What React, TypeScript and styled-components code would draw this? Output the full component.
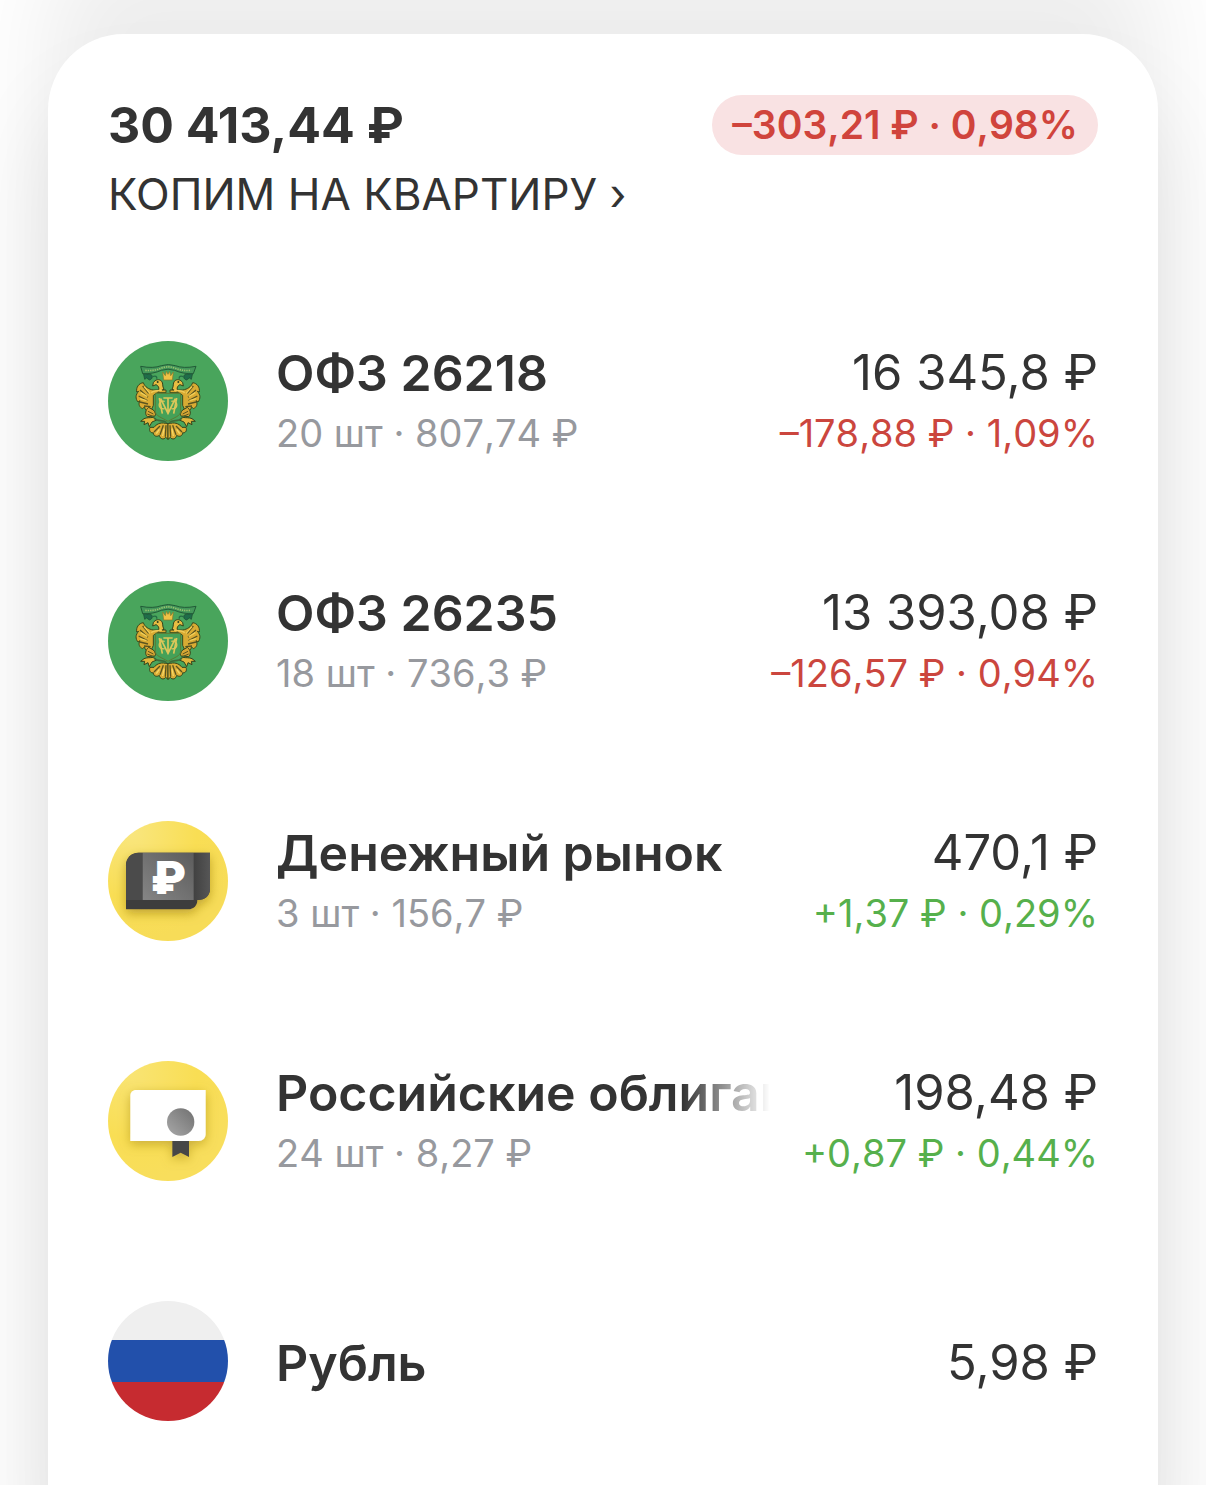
import React from "react";
import styled, { createGlobalStyle } from "styled-components";

type Trend = "up" | "down";

interface Holding {
  id: string;
  name: string;
  details?: string;
  value: string;
  change?: string;
  trend?: Trend;
  icon: React.ReactNode;
  faded?: boolean;
}

const GlobalStyle = createGlobalStyle`
  * {
    box-sizing: border-box;
  }

  body {
    margin: 0;
    background: #fefefe;
    color: #333333;
    font-family: Inter, "Liberation Sans", sans-serif;
  }
`;

const Page = styled.main`
  display: flex;
  flex-direction: column;
  min-height: 100vh;
  padding: 34px 48px 0;
  overflow: hidden;
`;

const Card = styled.section`
  flex: 1;
  margin-bottom: -160px;
  padding: 60px 60px 224px;
  border-radius: 76px 76px 0 0;
  background: #ffffff;
  box-shadow:
    0 60px 90px rgba(0, 0, 0, 0.09),
    0 -90px 90px rgba(0, 0, 0, 0.065);
`;

const Header = styled.header`
  display: flex;
  flex-direction: column;
  gap: 10px;
`;

const TotalRow = styled.div`
  display: flex;
  align-items: center;
  justify-content: space-between;
  gap: 32px;
`;

const Total = styled.h1`
  margin: 0;
  font-size: 50px;
  font-weight: 700;
  line-height: 62px;
`;

const Badge = styled.span`
  padding: 0 20px;
  border-radius: 30px;
  background: #f9e2e3;
  color: #d0443c;
  font-size: 39px;
  font-weight: 600;
  font-kerning: none;
  line-height: 60px;
  white-space: nowrap;
`;

const AccountLink = styled.a`
  align-self: flex-start;
  color: inherit;
  font-size: 44px;
  line-height: 56px;
  text-decoration: none;
`;

const List = styled.ul`
  display: flex;
  flex-direction: column;
  gap: 116px;
  margin: 117px 0 0;
  padding: 0;
  list-style: none;
`;

const Row = styled.li`
  display: flex;
  align-items: center;
  min-height: 124px;
`;

const IconSvg = styled.svg`
  display: block;
  flex: none;
  width: 120px;
  height: 120px;
  margin-right: 48px;
  border-radius: 50%;
`;

const Info = styled.div`
  flex: 1;
  min-width: 0;
  padding-top: 4px;
`;

const Amounts = styled.div`
  flex: none;
  margin-left: 32px;
  padding-top: 4px;
  text-align: right;
`;

const Name = styled.h2<{ $faded?: boolean }>`
  margin: 0;
  overflow: hidden;
  font-size: 50px;
  font-weight: 600;
  line-height: 60px;
  white-space: nowrap;
  mask-image: ${({ $faded }) =>
    $faded ? "linear-gradient(to left, transparent, #000 88px)" : "none"};
`;

const Details = styled.p`
  margin: 0;
  color: #97999e;
  font-size: 38px;
  font-kerning: none;
  line-height: 60px;
`;

const Value = styled.p`
  margin: 0;
  font-size: 49px;
  line-height: 60px;
`;

const Change = styled.p<{ $trend?: Trend }>`
  margin: 0;
  color: ${({ $trend }) => ($trend === "up" ? "#56b04c" : "#cb463e")};
  font-size: 38px;
  font-kerning: none;
  line-height: 60px;
`;

// Half of the eagle, mirrored around x=204 for the other side
const EagleHalf = () => (
  <g>
    {/* wing */}
    <path
      d="M130 158 C116 160 108 172 110 186 L116 184 C106 194 106 206 114 216 L120 212 C114 222 118 232 128 236 L134 230 C134 240 142 246 152 244 L160 226 L160 196 L172 188 L198 188 L198 180 L160 180 C146 178 134 170 130 158 Z"
      fill="#d9ab33"
      stroke="#3c4a1c"
      strokeWidth="3"
    />
    <path
      d="M128 168 L146 190 M120 180 L144 202 M116 198 L142 212 M120 216 L144 222 M132 228 L152 230"
      stroke="#5a5420"
      strokeWidth="4"
    />
    <path
      d="M132 170 L150 190 M122 188 L142 200 M120 206 L140 212"
      stroke="#f1ce55"
      strokeWidth="4"
    />
    {/* head and neck */}
    <path
      d="M160 158 C166 148 178 146 185 154 C190 160 186 168 192 178 L174 184 C180 174 174 166 168 164 L158 168 Z"
      fill="#e8bd42"
      stroke="#33431b"
      strokeWidth="3"
    />
    <circle cx="173" cy="156" r="3" fill="#33431b" />
    <path d="M154 188 C160 180 174 184 186 180" stroke="#f0cb58" strokeWidth="5" fill="none" />
    {/* leg */}
    <path
      d="M146 232 C136 240 134 252 142 260 L158 258 C170 262 168 248 160 240 Z"
      fill="#d7a634"
      stroke="#34441c"
      strokeWidth="3"
    />
    <path d="M144 244 L160 252 M142 252 L156 258" stroke="#5a5420" strokeWidth="3" />
    {/* claws */}
    <path
      d="M160 262 C150 264 140 262 132 266 L122 274 L134 274 L132 284 L144 278 L148 290 L156 276 L170 270 Z"
      fill="#e2b63c"
      stroke="#34441c"
      strokeWidth="3"
    />
    {/* tail */}
    <path
      d="M196 280 C180 276 168 284 162 292 L150 292 C146 302 152 310 160 308 C160 318 170 322 178 316 C180 328 192 330 197 322 L204 328 L204 280 Z"
      fill="#dcae36"
      stroke="#34441c"
      strokeWidth="3"
    />
    <path
      d="M198 286 L196 320 M190 286 L180 314 M180 288 L162 306"
      stroke="#5a5420"
      strokeWidth="4"
    />
    <path d="M192 296 L188 318 M178 298 L169 311" stroke="#f6d766" strokeWidth="4" />
    <path d="M162 264 C174 278 188 266 200 278" stroke="#3d6b3a" strokeWidth="5" fill="none" />
    {/* ribbon end */}
    <path
      d="M130 130 L154 134 C160 140 156 148 148 150 L140 144 L134 148 Z"
      fill="#1f6d49"
      stroke="#1e4a32"
      strokeWidth="2"
    />
    <path d="M158 140 C166 136 172 140 170 146" stroke="#256c45" strokeWidth="4" fill="none" />
  </g>
);

const CrestIcon = () => (
  <IconSvg viewBox="24 33 360 360" aria-hidden="true">
    <rect x="24" y="33" width="360" height="360" fill="#49a55c" />
    <EagleHalf />
    <g transform="translate(408 0) scale(-1 1)">
      <EagleHalf />
    </g>
    {/* shield */}
    <path
      d="M166 190 H242 V244 C242 258 224 262 204 274 C184 262 166 258 166 244 Z"
      fill="#45a158"
      stroke="#5e7932"
      strokeWidth="3"
    />
    <path
      d="M178 204 L187 251 M230 204 L221 251 M182 206 L204 250 L226 206 M204 202 V252 M190 204 H218"
      stroke="#dcc75a"
      strokeWidth="5"
      fill="none"
    />
    <path
      d="M194 214 C172 210 172 240 194 236 M214 214 C236 210 236 240 214 236"
      stroke="#dcc75a"
      strokeWidth="4"
      fill="none"
    />
    {/* crown */}
    <path
      d="M188 126 L196 137 L199 124 L204 133 L209 124 L212 137 L220 126 L217 150 H191 Z"
      fill="#eec246"
      stroke="#8d7a28"
      strokeWidth="2"
    />
    {/* ribbon */}
    <path
      d="M122 109 C148 114 168 113 184 107 Q205 100 226 107 C242 113 262 114 288 109 L280 131 C258 132 240 128 224 121 Q204 114 184 121 C168 128 150 132 128 131 Z"
      fill="#43975a"
      stroke="#225b38"
      strokeWidth="3"
    />
    <path
      d="M136 121 C154 123 170 120 185 114 Q204 107 223 114 C240 120 254 123 274 121"
      stroke="#9ac06e"
      strokeWidth="5"
      strokeDasharray="4 3"
      fill="none"
    />
  </IconSvg>
);

const MoneyMarketIcon = () => (
  <IconSvg viewBox="24 33 360 360" aria-hidden="true">
    <defs>
      <radialGradient id="moneyBg" cx="0.2" cy="0.1" r="0.9">
        <stop offset="0" stopColor="#f9e67e" />
        <stop offset="0.6" stopColor="#f9de54" />
        <stop offset="1" stopColor="#f7dc58" />
      </radialGradient>
      <linearGradient id="billFace" x1="0" y1="1" x2="1" y2="0">
        <stop offset="0" stopColor="#858585" />
        <stop offset="1" stopColor="#5c5c5c" />
      </linearGradient>
      <linearGradient id="billSide" x1="0" y1="0" x2="1" y2="0">
        <stop offset="0" stopColor="#414141" />
        <stop offset="1" stopColor="#565656" />
      </linearGradient>
      <filter id="moneyShadow" x="-30%" y="-30%" width="160%" height="170%">
        <feDropShadow dx="0" dy="12" stdDeviation="16" floodColor="#9a7b10" floodOpacity="0.6" />
      </filter>
    </defs>
    <rect x="24" y="33" width="360" height="360" fill="url(#moneyBg)" />
    <g filter="url(#moneyShadow)">
      <path
        d="M116 128 H330 V236 C330 256 316 270 292 270 C292 286 282 298 264 298 H78 V166 C78 144 94 128 116 128 Z"
        fill="#3c3c3c"
      />
    </g>
    <path d="M116 128 H128 V270 H78 V166 C78 144 94 128 116 128 Z" fill="#4b4b4b" />
    <path d="M281 128 H330 V236 C330 256 316 270 292 270 H281 Z" fill="url(#billSide)" />
    <rect x="128" y="128" width="153" height="142" fill="url(#billFace)" />
    <text
      x="204"
      y="251"
      fill="#ffffff"
      fontFamily="Inter, sans-serif"
      fontSize="136"
      fontWeight="900"
      textAnchor="middle"
    >
      ₽
    </text>
  </IconSvg>
);

const BondsIcon = () => (
  <IconSvg viewBox="24 33 360 360" aria-hidden="true">
    <defs>
      <radialGradient id="bondsBg" cx="0.2" cy="0.1" r="0.9">
        <stop offset="0" stopColor="#f9e473" />
        <stop offset="0.6" stopColor="#f9de54" />
        <stop offset="1" stopColor="#f8de5c" />
      </radialGradient>
      <linearGradient id="seal" x1="0" y1="1" x2="1" y2="0">
        <stop offset="0" stopColor="#a8a8a8" />
        <stop offset="1" stopColor="#707070" />
      </linearGradient>
      <filter id="bondsShadow" x="-30%" y="-30%" width="160%" height="170%">
        <feDropShadow dx="0" dy="10" stdDeviation="16" floodColor="#9a7b10" floodOpacity="0.5" />
      </filter>
    </defs>
    <rect x="24" y="33" width="360" height="360" fill="url(#bondsBg)" />
    <g filter="url(#bondsShadow)">
      <path d="M217 266 H267 V321 L242 308 L217 321 Z" fill="#474747" />
      <path
        d="M108 120 H317 V252 C317 264 308 273 296 273 H91 V137 C91 127 98 120 108 120 Z"
        fill="#ffffff"
      />
    </g>
    <circle cx="242" cy="216" r="41" fill="url(#seal)" />
  </IconSvg>
);

const RubleFlagIcon = () => (
  <IconSvg viewBox="0 0 120 120" aria-hidden="true">
    <rect width="120" height="39" fill="#efefef" />
    <rect y="39" width="120" height="42" fill="#2250ab" />
    <rect y="81" width="120" height="39" fill="#c62b30" />
  </IconSvg>
);

const holdings: Holding[] = [
  {
    id: "ofz-26218",
    name: "ОФЗ 26218",
    details: "20 шт · 807,74 ₽",
    value: "16 345,8 ₽",
    change: "–178,88 ₽ · 1,09%",
    trend: "down",
    icon: <CrestIcon />,
  },
  {
    id: "ofz-26235",
    name: "ОФЗ 26235",
    details: "18 шт · 736,3 ₽",
    value: "13 393,08 ₽",
    change: "–126,57 ₽ · 0,94%",
    trend: "down",
    icon: <CrestIcon />,
  },
  {
    id: "money-market",
    name: "Денежный рынок",
    details: "3 шт · 156,7 ₽",
    value: "470,1 ₽",
    change: "+1,37 ₽ · 0,29%",
    trend: "up",
    icon: <MoneyMarketIcon />,
  },
  {
    id: "bonds",
    name: "Российские облигации",
    details: "24 шт · 8,27 ₽",
    value: "198,48 ₽",
    change: "+0,87 ₽ · 0,44%",
    trend: "up",
    icon: <BondsIcon />,
    faded: true,
  },
  {
    id: "rub",
    name: "Рубль",
    value: "5,98 ₽",
    icon: <RubleFlagIcon />,
  },
];

const HoldingRow: React.FC<{ holding: Holding }> = ({ holding }) => (
  <Row>
    {holding.icon}
    <Info>
      <Name $faded={holding.faded}>{holding.name}</Name>
      {holding.details && <Details>{holding.details}</Details>}
    </Info>
    <Amounts>
      <Value>{holding.value}</Value>
      {holding.change && <Change $trend={holding.trend}>{holding.change}</Change>}
    </Amounts>
  </Row>
);

const App: React.FC = () => {
  return (
    <>
      <GlobalStyle />
      <Page>
        <Card>
          <Header>
            <TotalRow>
              <Total>30 413,44 ₽</Total>
              <Badge>–303,21 ₽ · 0,98%</Badge>
            </TotalRow>
            <AccountLink href="#account">КОПИМ НА КВАРТИРУ ›</AccountLink>
          </Header>
          <List>
            {holdings.map((holding) => (
              <HoldingRow key={holding.id} holding={holding} />
            ))}
          </List>
        </Card>
      </Page>
    </>
  );
};

export default App;
